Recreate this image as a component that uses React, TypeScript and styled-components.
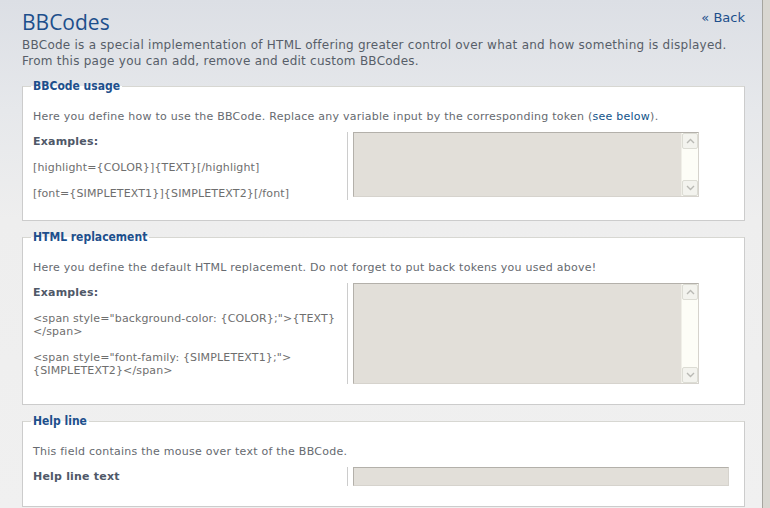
import React from 'react';
import styled, { createGlobalStyle } from 'styled-components';

const GlobalStyle = createGlobalStyle`
  html, body {
    margin: 0;
    padding: 0;
    background: #d9d7d1;
  }
  body {
    font-family: "DejaVu Sans", Verdana, sans-serif;
  }
`;

const Page = styled.div`
  display: flex;
  width: 770px;
  height: 508px;
  overflow: hidden;
`;

const Main = styled.div`
  width: 723px;
  padding: 9px 17px 0 22px;
  border-right: 1px solid #a6a59f;
  background: linear-gradient(to bottom, #dcdfe5 0, #e6e8eb 110px, #eeeeee 220px, #f0f0f0 100%);
`;

const Strip = styled.div`
  flex: 1;
  background: #d9d7d1;
`;

const Header = styled.div`
  display: flex;
  justify-content: space-between;
  align-items: flex-start;
`;

const Title = styled.h1`
  margin: 0;
  font-family: "Open Sans", sans-serif;
  font-weight: 400;
  font-size: 21px;
  line-height: 26px;
  color: #1d4f8c;
`;

const BackLink = styled.a`
  margin-top: 1px;
  font-size: 13px;
  line-height: 16px;
  color: #1d4f8c;
  text-decoration: none;
`;

const Intro = styled.p`
  margin: 2px 0 10px;
  font-size: 12px;
  letter-spacing: 0.25px;
  line-height: 16px;
  color: #575e69;
`;

const Fieldset = styled.fieldset`
  margin: 0 0 9px;
  padding: 0 10px 10px;
  border: 1px solid #cccccc;
  border-top-color: #d7d7d2;
  background: #ffffff;
  min-width: 0;
`;

const Legend = styled.legend`
  padding: 0 2px;
  margin-left: -2px;
  font-family: "DejaVu Sans Condensed", "DejaVu Sans", sans-serif;
  font-weight: bold;
  font-size: 12px;
  line-height: 14px;
  color: #1d4f8c;
`;

const Explain = styled.p`
  margin: 16px 0 8px;
  font-size: 11px;
  letter-spacing: 0.25px;
  line-height: 15px;
  color: #666a70;
`;

const Row = styled.dl`
  display: flex;
  margin: 0 0 10px;
`;

const Term = styled.dt`
  width: 45%;
  box-sizing: border-box;
  padding-top: 3px;
  border-right: 1px solid #cccccc;
`;

const Label = styled.div`
  font-size: 11px;
  font-weight: bold;
  letter-spacing: 0.2px;
  line-height: 13px;
  color: #4f5868;
`;

const Example = styled.div`
  margin-top: 13px;
  font-size: 11px;
  letter-spacing: 0.15px;
  line-height: 13px;
  white-space: nowrap;
  color: #6e6e6e;
`;

const Value = styled.dd`
  margin: 0;
  padding-left: 5px;
`;

const TextBox = styled.div<{ $h: number }>`
  display: flex;
  width: 346px;
  height: ${({ $h }) => $h}px;
  box-sizing: border-box;
  border: 1px solid #b3b0aa;
  border-right-color: #d6d3cd;
  border-bottom-color: #d6d3cd;
  background: #e2dfd9;
`;

const Fill = styled.div`
  flex: 1;
`;

const Track = styled.div`
  display: flex;
  flex-direction: column;
  justify-content: space-between;
  width: 16px;
  background: #fdfdf7;
  border-left: 1px solid #f0efe8;
`;

const ScrollButton = styled.div`
  display: flex;
  align-items: center;
  justify-content: center;
  height: 16px;
  box-sizing: border-box;
  border: 1px solid #dcdcd4;
  border-radius: 2px;
  background: #f3f3ee;
`;

const Input = styled.div`
  width: 376px;
  height: 19px;
  box-sizing: border-box;
  border: 1px solid #b3b0aa;
  border-right-color: #d6d3cd;
  border-bottom-color: #d6d3cd;
  background: #e2dfd9;
`;

const Link = styled.a`
  color: #105289;
  text-decoration: none;
`;

const Chevron: React.FC<{ up?: boolean }> = ({ up }) => (
  <svg width="9" height="6" viewBox="0 0 9 6">
    <polyline
      points={up ? '1,5 4.5,1.5 8,5' : '1,1 4.5,4.5 8,1'}
      fill="none"
      stroke="#b9b9b4"
      strokeWidth="1.4"
    />
  </svg>
);

const TextArea: React.FC<{ height: number }> = ({ height }) => (
  <TextBox $h={height}>
    <Fill />
    <Track>
      <ScrollButton>
        <Chevron up />
      </ScrollButton>
      <ScrollButton>
        <Chevron />
      </ScrollButton>
    </Track>
  </TextBox>
);

export default function App() {
  return (
    <>
      <GlobalStyle />
      <Page>
        <Main>
          <Header>
            <Title>BBCodes</Title>
            <BackLink href="#">« Back</BackLink>
          </Header>
          <Intro>
            BBCode is a special implementation of HTML offering greater control over what and how something is displayed.
            <br />
            From this page you can add, remove and edit custom BBCodes.
          </Intro>

          <Fieldset>
            <Legend>BBCode usage</Legend>
            <Explain>
              Here you define how to use the BBCode. Replace any variable input by the corresponding token (
              <Link href="#">see below</Link>).
            </Explain>
            <Row>
              <Term>
                <Label>Examples:</Label>
                <Example>[highlight={'{COLOR}'}]{'{TEXT}'}[/highlight]</Example>
                <Example>[font={'{SIMPLETEXT1}'}]{'{SIMPLETEXT2}'}[/font]</Example>
              </Term>
              <Value>
                <TextArea height={65} />
              </Value>
            </Row>
          </Fieldset>

          <Fieldset>
            <Legend>HTML replacement</Legend>
            <Explain>Here you define the default HTML replacement. Do not forget to put back tokens you used above!</Explain>
            <Row>
              <Term>
                <Label>Examples:</Label>
                <Example>
                  {'<span style="background-color: {COLOR};">{TEXT}'}
                  <br />
                  {'</span>'}
                </Example>
                <Example>
                  {'<span style="font-family: {SIMPLETEXT1};">'}
                  <br />
                  {'{SIMPLETEXT2}</span>'}
                </Example>
              </Term>
              <Value>
                <TextArea height={101} />
              </Value>
            </Row>
          </Fieldset>

          <Fieldset>
            <Legend>Help line</Legend>
            <Explain>This field contains the mouse over text of the BBCode.</Explain>
            <Row>
              <Term>
                <Label>Help line text</Label>
              </Term>
              <Value>
                <Input />
              </Value>
            </Row>
          </Fieldset>
        </Main>
        <Strip />
      </Page>
    </>
  );
}
